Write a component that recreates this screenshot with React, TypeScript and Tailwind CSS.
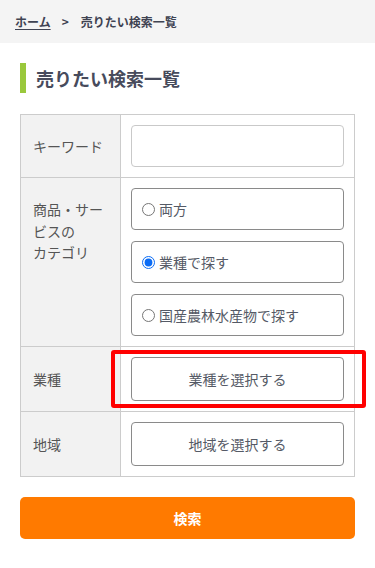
import React from "react";

const font = { fontFamily: '"Noto Sans CJK JP", "Noto Sans", sans-serif' };

function RadioBox({ label, checked }: { label: string; checked?: boolean }) {
  return (
    <label className="flex h-[42px] items-center rounded-[4px] border border-[#8a8a8a] bg-white pl-[10px] text-[14px] text-[#555a66]">
      <input
        type="radio"
        name="cat"
        defaultChecked={checked}
        className="m-0 h-[13px] w-[13px] accent-[#0b6cf5]"
      />
      <span className="ml-[4px]">{label}</span>
    </label>
  );
}

export default function App() {
  return (
    <div className="min-h-[568px] bg-white" style={font}>
      <div className="flex h-[43px] items-center bg-[#f4f4f4] px-[15px] text-[12px] font-bold text-[#3f4352]">
        <a className="underline underline-offset-2">ホーム</a>
        <span className="ml-[11px] mr-[12px]">&gt;</span>
        <span>売りたい検索一覧</span>
      </div>

      <div className="px-5">
        <div className="mt-[20px] flex items-center">
          <div className="h-[30px] w-[6px] bg-[#9ac83c]" />
          <h1 className="ml-[10px] text-[18px] font-bold leading-[30px] text-[#474b5c]">売りたい検索一覧</h1>
        </div>

        <div className="mt-[21px] border border-[#cccccc] text-[14px] text-[#555555]">
          <div className="flex border-b border-[#cccccc]">
            <div className="flex w-[100px] shrink-0 items-center border-r border-[#cccccc] bg-[#f2f2f2] px-3">キーワード</div>
            <div className="flex-1 p-[10px]">
              <input className="block h-[42px] w-full rounded-[4px] border border-[#c9c9c9] bg-white px-2 outline-none" />
            </div>
          </div>

          <div className="flex border-b border-[#cccccc]">
            <div className="w-[100px] shrink-0 border-r border-[#cccccc] bg-[#f2f2f2] px-3 pt-[21px] leading-[21.5px]">
              商品・サー
              <br />
              ビスの
              <br />
              カテゴリ
            </div>
            <div className="flex flex-1 flex-col gap-[11px] p-[10px]">
              <RadioBox label="両方" />
              <RadioBox label="業種で探す" checked />
              <RadioBox label="国産農林水産物で探す" />
            </div>
          </div>

          <div className="flex border-b border-[#cccccc]">
            <div className="flex w-[100px] shrink-0 items-center border-r border-[#cccccc] bg-[#f2f2f2] px-3">業種</div>
            <div className="relative flex-1 p-[10px]">
              <button className="flex h-[44px] w-full items-center justify-center rounded-[4px] border border-[#8a8a8a] bg-white text-[14px] text-[#555a66]">
                業種を選択する
              </button>
              <div className="pointer-events-none absolute left-[-10px] top-[3px] h-[58px] w-[255px] rounded-[3px] border-4 border-[#ff0000]" />
            </div>
          </div>

          <div className="flex">
            <div className="flex w-[100px] shrink-0 items-center border-r border-[#cccccc] bg-[#f2f2f2] px-3">地域</div>
            <div className="flex-1 p-[10px]">
              <button className="flex h-[44px] w-full items-center justify-center rounded-[4px] border border-[#8a8a8a] bg-white text-[14px] text-[#555a66]">
                地域を選択する
              </button>
            </div>
          </div>
        </div>

        <button className="mt-[20px] flex h-[42px] w-full items-center justify-center rounded-[5px] bg-[#ff7a00] text-[14px] font-bold text-white">
          検索
        </button>
      </div>
    </div>
  );
}
